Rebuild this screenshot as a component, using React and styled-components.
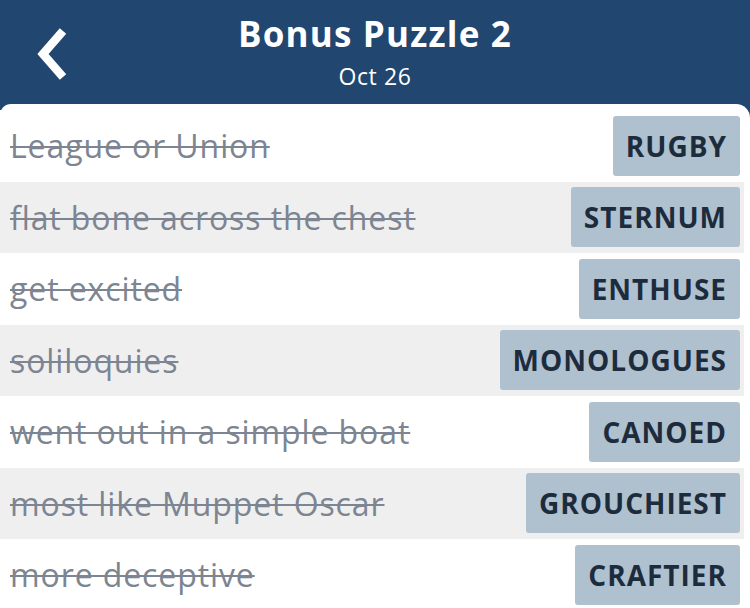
import React from "react";
import styled, { createGlobalStyle } from "styled-components";

const Global = createGlobalStyle`
  html, body { margin: 0; padding: 0; }
  body { background: #21466f; font-family: "Open Sans", "Lato", sans-serif; }
`;

const Page = styled.div`
  width: 750px;
  height: 608px;
  overflow: hidden;
  display: flex;
  flex-direction: column;
  background: #21466f;
`;

const Header = styled.header`
  height: 104px;
  display: flex;
  flex-direction: column;
  align-items: center;
  position: relative;
  color: #fff;
  flex-shrink: 0;
`;

const Title = styled.h1`
  margin: 12px 0 0;
  font-size: 35px;
  font-weight: 700;
  line-height: 44px;
  letter-spacing: 1.2px;
`;

const Sub = styled.div`
  font-size: 23px;
  line-height: 28px;
  margin-top: 6px;
  letter-spacing: 0.6px;
`;

const Back = styled.button`
  position: absolute;
  left: 30px;
  top: 24px;
  width: 46px;
  height: 60px;
  border: 0;
  padding: 0;
  background: none;
  display: flex;
  align-items: center;
  justify-content: center;
`;

const Card = styled.main`
  flex: 1;
  background: #fff;
  border-radius: 11px 14px 0 0;
  padding: 6px 6px 0 0;
`;

const Row = styled.div`
  height: 71.5px;
  display: flex;
  align-items: center;
  justify-content: space-between;
  padding: 0 4px 0 10px;
  background: ${(p) => (p.$alt ? "#efefef" : "#fff")};
`;

const Clue = styled.span`
  font-size: 32px;
  letter-spacing: 0.9px;
  color: #7c8591;
  text-decoration: line-through;
  text-decoration-thickness: 2px;
  white-space: nowrap;
`;

const Answer = styled.div`
  height: 60px;
  display: flex;
  align-items: center;
  padding: 0 13px;
  border-radius: 3px;
  background: #afc0cf;
  color: #1d2c3c;
  font-size: 28px;
  font-weight: 700;
  letter-spacing: 1px;
`;

const items = [
  ["League or Union", "RUGBY"],
  ["flat bone across the chest", "STERNUM"],
  ["get excited", "ENTHUSE"],
  ["soliloquies", "MONOLOGUES"],
  ["went out in a simple boat", "CANOED"],
  ["most like Muppet Oscar", "GROUCHIEST"],
  ["more deceptive", "CRAFTIER"],
];

export default function App() {
  return (
    <>
      <Global />
      <Page>
        <Header>
          <Back aria-label="Back">
            <svg width="40" height="56" viewBox="0 0 40 56">
              <path d="M30 5 L10 28 L30 51" fill="none" stroke="#fff" strokeWidth="8.5" strokeLinejoin="miter" />
            </svg>
          </Back>
          <Title>Bonus Puzzle 2</Title>
          <Sub>Oct 26</Sub>
        </Header>
        <Card>
          {items.map(([c, a], i) => (
            <Row key={a} $alt={i % 2 === 1}>
              <Clue>{c}</Clue>
              <Answer>{a}</Answer>
            </Row>
          ))}
        </Card>
      </Page>
    </>
  );
}
